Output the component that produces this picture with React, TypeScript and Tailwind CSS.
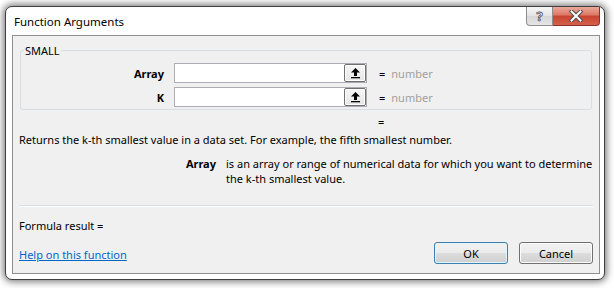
import { useState } from "react";

type Arg = {
  name: string;
  value: string;
};

const args: Arg[] = [
  { name: "Array", value: "" },
  { name: "K", value: "" },
];

function RefButton() {
  // the little "collapse dialog" button at the right of each argument box
  return (
    <div className="w-[22px] h-full border border-[#707070] rounded-[2px] bg-[linear-gradient(#f6f6f6,#e6e6e6)] shadow-[inset_0_0_0_1px_#ffffff] flex items-center justify-center">
      <svg width="11" height="12" viewBox="0 0 11 12">
        <path d="M5.5 1 L10 5.5 H7 V9 H4 V5.5 H1 Z" fill="#000" />
        <rect x="1" y="10" width="9" height="1.3" fill="#000" />
      </svg>
    </div>
  );
}

function ArgRow({ arg, onChange }: { arg: Arg; onChange: (v: string) => void }) {
  return (
    <div className="flex items-center h-[20px]">
      <div className="w-[143px] text-right font-bold">{arg.name}</div>
      <div className="ml-[10px] w-[193px] h-[20px] flex border border-[#abadb3] bg-white">
        <input
          value={arg.value}
          onChange={(e) => onChange(e.target.value)}
          className="flex-1 min-w-0 px-[2px] outline-none bg-white"
        />
        <RefButton />
      </div>
      <span className="ml-[12px]">=</span>
      <span className="ml-[6px] text-[#a0a0a0]">number</span>
    </div>
  );
}

export default function App() {
  const [values, setValues] = useState(args);

  const update = (i: number, v: string) =>
    setValues((prev) => prev.map((a, j) => (j === i ? { ...a, value: v } : a)));

  return (
    <div className="w-[614px] h-[288px] bg-white pl-[5px] pt-[6px] font-['Segoe_UI','Noto_Sans',sans-serif] text-[11px] leading-[15px] text-black">
      <div className="w-[600px] h-[274px] rounded-[7px] border border-[#3f3f3f] bg-white shadow-[0_0_7px_2px_rgba(0,0,0,0.5)] flex flex-col pl-[6px] pr-[4px] pb-[5px]">
        {/* title bar */}
        <div className="h-[28px] flex justify-between">
          <span className="pl-[2px] pt-[7px] text-[11.5px]">Function Arguments</span>
          <div className="flex h-[19px]">
            <div className="w-[27px] border border-[#8d8d8d] border-t-0 rounded-bl-[4px] bg-[linear-gradient(#f7f7f7,#e4e4e4_50%,#d6d6d6_50%,#e6e6e6)] flex items-center justify-center">
              <span className="font-bold text-[13px] text-white [-webkit-text-stroke:0.8px_#555] leading-none">?</span>
            </div>
            <div className="w-[47px] border border-[#8a3326] border-t-0 border-l-0 rounded-br-[4px] bg-[linear-gradient(#eaa89a,#db7866_45%,#c9432f_50%,#d4604c)] flex items-center justify-center">
              <svg width="14" height="12" viewBox="0 0 14 12">
                <path d="M2.5 1.5 L11.5 10.5 M11.5 1.5 L2.5 10.5" stroke="#4a4a4a" strokeWidth="4" strokeLinecap="square" />
                <path d="M2.5 1.5 L11.5 10.5 M11.5 1.5 L2.5 10.5" stroke="#ffffff" strokeWidth="2" strokeLinecap="square" />
              </svg>
            </div>
          </div>
        </div>

        {/* dialog body */}
        <div className="flex-1 border border-[#8e8f8f] bg-[#f0f0f0] flex flex-col">
          <fieldset className="mt-[7px] mx-[7px] border border-[#d5dfe5] rounded-[3px] pl-0 pb-[2px]">
            <legend className="ml-[3px] px-[1px]">SMALL</legend>
            <div className="mt-[5px] flex flex-col gap-[4px]">
              {values.map((a, i) => (
                <ArgRow key={a.name} arg={a} onChange={(v) => update(i, v)} />
              ))}
            </div>
          </fieldset>

          <div className="mt-[4px] pl-[365px]">=</div>

          <p className="mt-[3px] pl-[6px]">
            Returns the k-th smallest value in a data set. For example, the fifth smallest number.
          </p>

          <div className="mt-[9px] flex">
            <div className="w-[203px] text-right font-bold">Array</div>
            <p className="ml-[10px] w-[370px]">
              is an array or range of numerical data for which you want to determine the k-th smallest value.
            </p>
          </div>

          <div className="mt-[19px] mx-[6px] h-[2px] border-t border-[#d5dfe5] border-b border-b-white" />

          <div className="mt-[11px] pl-[6px]">Formula result =</div>

          <div className="mt-[9px] flex items-center pl-[6px] pr-[6px]">
            <a href="#" className="text-[#0066cc] underline flex-1 pt-[3px]">
              Help on this function
            </a>
            <button className="w-[74px] h-[22px] rounded-[3px] border border-[#3c7fb1] bg-[linear-gradient(#f2f2f2,#ebebeb_50%,#dddddd_50%,#cfcfcf)] shadow-[inset_0_0_0_1px_#e3f4fc]">
              OK
            </button>
            <button className="ml-[11px] w-[74px] h-[22px] rounded-[3px] border border-[#707070] bg-[linear-gradient(#f2f2f2,#ebebeb_50%,#dddddd_50%,#cfcfcf)] shadow-[inset_0_0_0_1px_#fcfcfc]">
              Cancel
            </button>
          </div>
        </div>
      </div>
    </div>
  );
}
